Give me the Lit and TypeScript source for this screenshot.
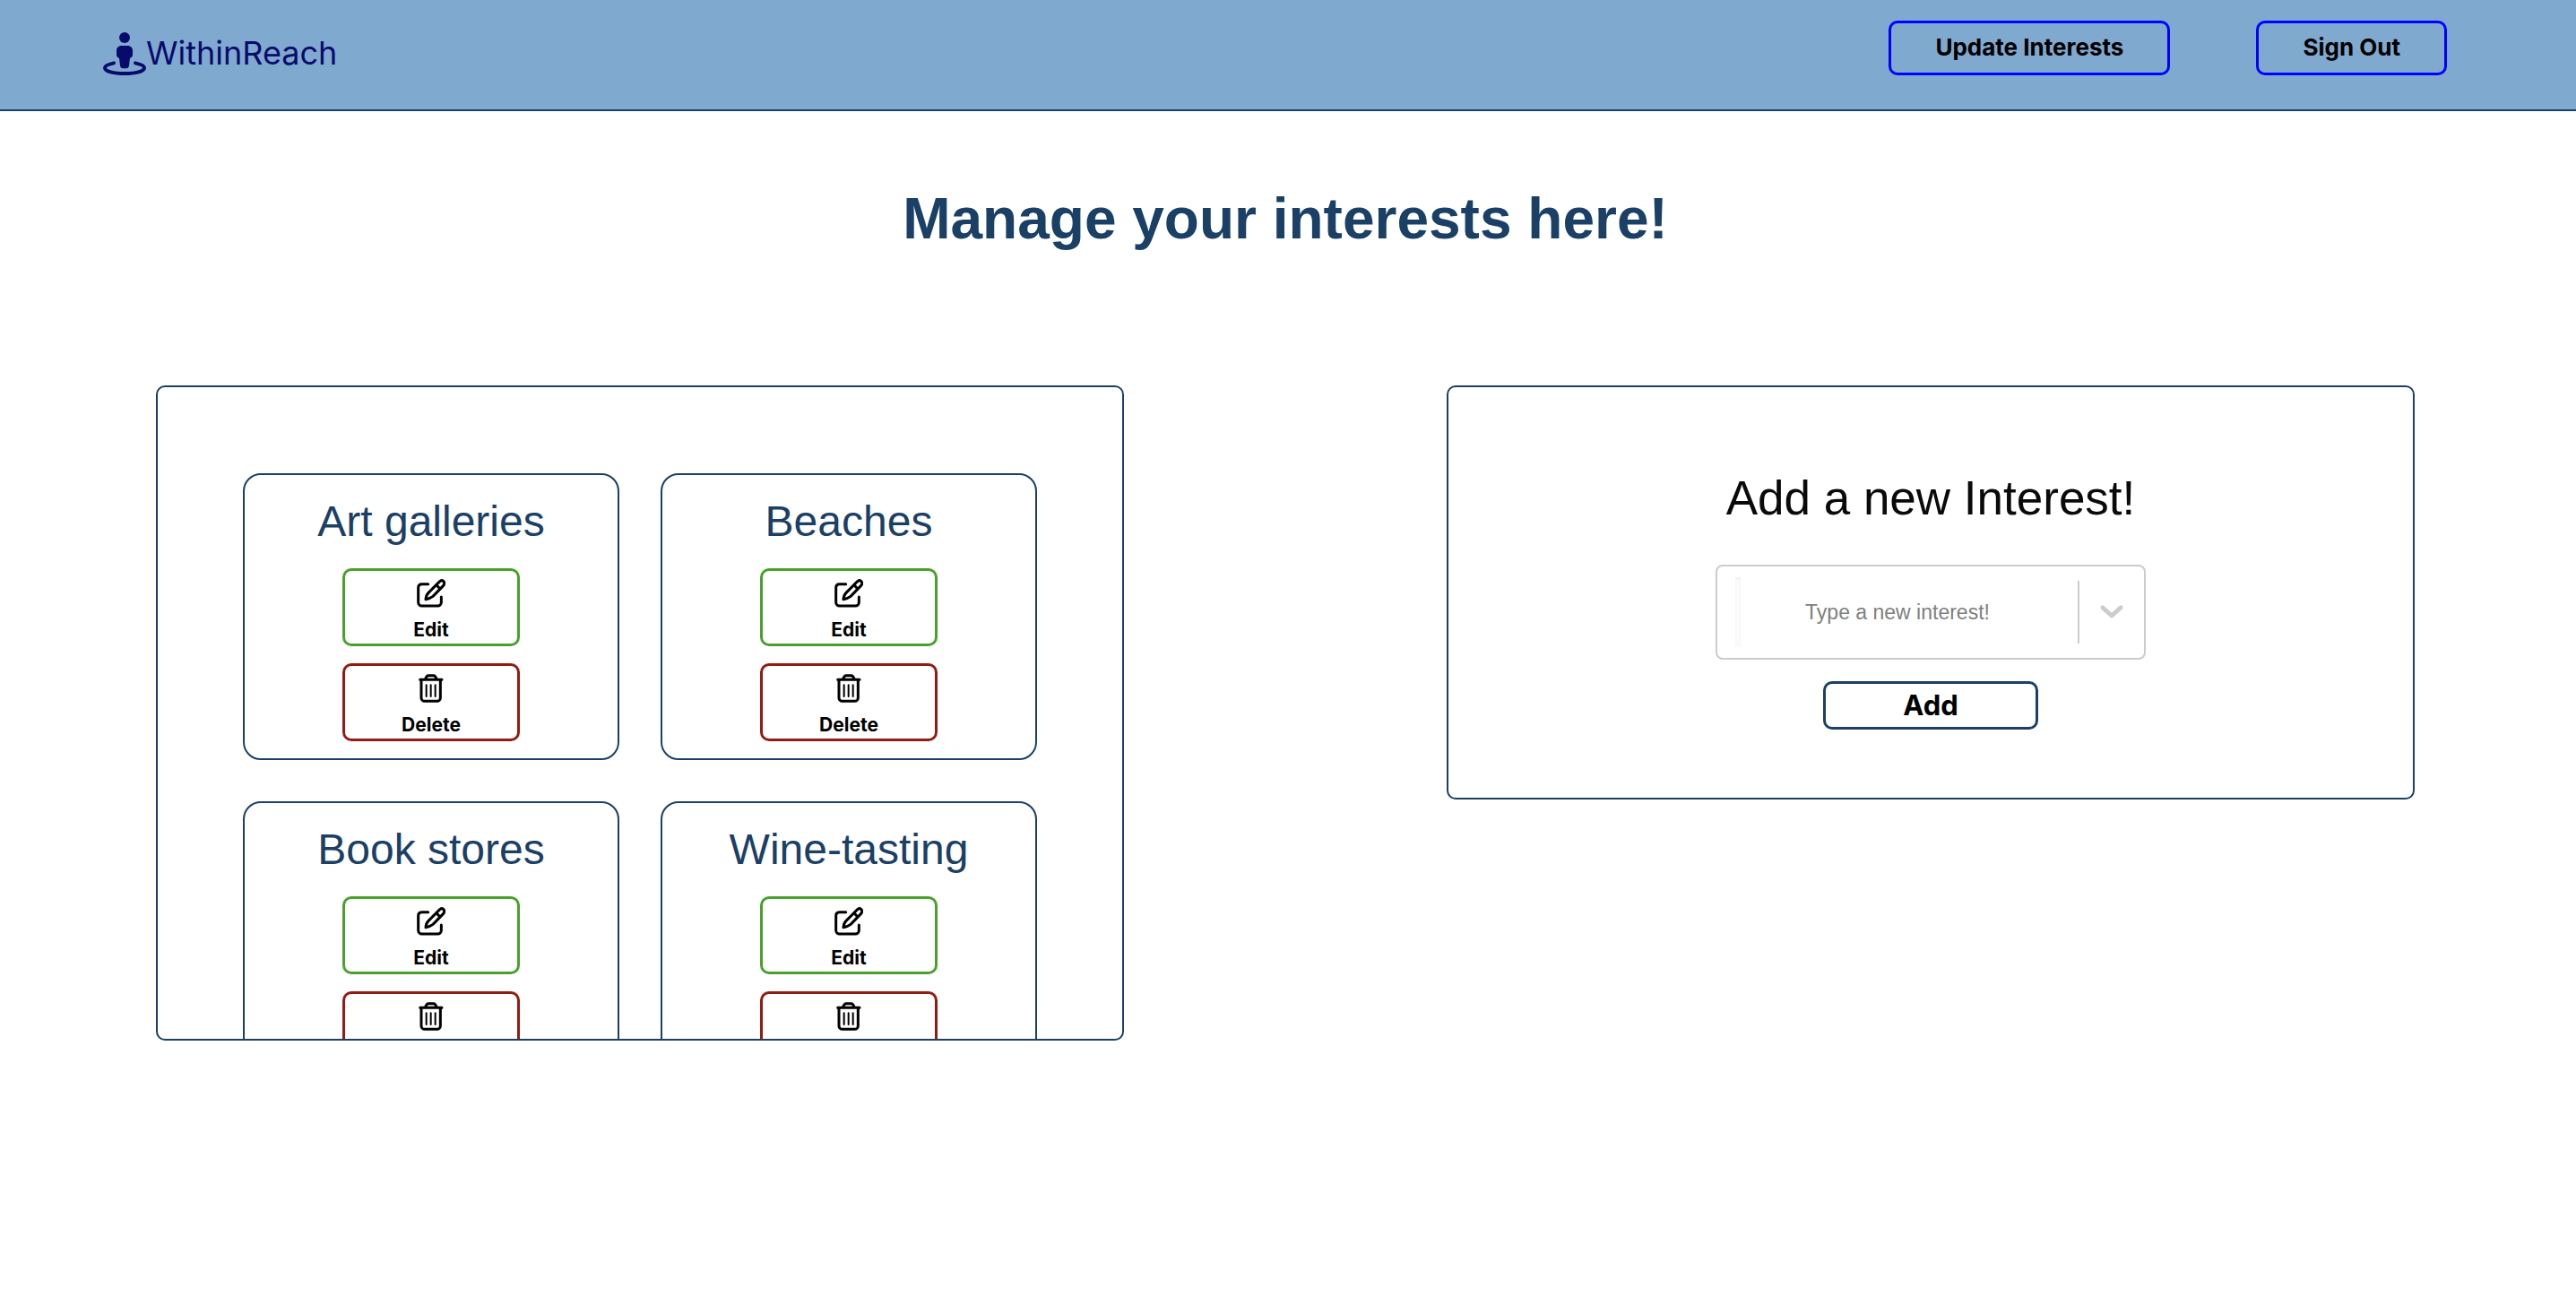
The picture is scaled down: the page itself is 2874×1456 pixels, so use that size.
import { LitElement, html, css, svg } from "lit";
import { customElement, property } from "lit/decorators.js";

const personIcon = svg`
  <circle cx="72" cy="18" r="18" fill="currentColor" />
  <path d="M61 45h22c9 0 16 7 16 16v15c0 6-4 9-9 11l-3 25c-1 6-4 9-9 9H66c-5 0-8-3-9-9l-3-25c-5-2-9-5-9-11V61c0-9 7-16 16-16z" fill="currentColor" />
  <path d="M36 103C18 107 6 112 6 119c0 12 30 19 66 19s66-7 66-19c0-7-12-12-30-16" fill="none" stroke="currentColor" stroke-width="12" stroke-linecap="round" />`;

const editIcon = html`<svg class="icon" viewBox="0 0 96 96" aria-hidden="true">
  <g fill="none" stroke="currentColor" stroke-width="9" stroke-linecap="round" stroke-linejoin="round">
    <path d="M38 17H17Q5 17 5 29V78a12 12 0 0 0 12 12H70a12 12 0 0 0 12-12V60" />
    <path d="M77 8Q85 2 90 8T89 22L54 58Q45 65 30 68Q31 54 39 46Z" />
    <path d="M66 20L77 32" />
  </g>
</svg>`;

const trashIcon = html`<svg class="icon" viewBox="0 0 96 96" aria-hidden="true">
  <g fill="none" stroke="currentColor" stroke-width="9" stroke-linecap="round" stroke-linejoin="round">
    <path d="M11 19H84M28 19Q32 5 39 5H56Q63 5 67 19" />
    <path d="M15 20V80a11 11 0 0 0 11 11H68a11 11 0 0 0 11-11V20" />
    <path d="M32 37V75M47 37V75M62 37V75" stroke-width="6" />
  </g>
</svg>`;

@customElement("interest-card")
class InterestCard extends LitElement {
  @property() name = "";

  static styles = css`
    :host {
      display: flex;
      flex-direction: column;
      align-items: center;
      box-sizing: border-box;
      padding: 24px 16px 19px;
      border: 2px solid #1b4066;
      border-radius: 20px;
    }
    .title {
      margin: 0 0 24px;
      color: #1b4066;
      font: 400 48px/56px "Liberation Sans", Arial, sans-serif;
    }
    .actions {
      display: flex;
      flex-direction: column;
      gap: 19px;
      width: 198px;
    }
    .action {
      display: flex;
      flex-direction: column;
      align-items: center;
      gap: 13px;
      padding: 9px 0 3px;
      border: 3px solid #4aa02c;
      border-radius: 10px;
      background: none;
      color: #000;
      font: 700 21px/24px Inter, sans-serif;
      cursor: pointer;
    }
    .delete {
      border-color: #921c12;
    }
    .icon {
      display: block;
      width: 32px;
      height: 32px;
    }
  `;

  render() {
    return html`
      <h2 class="title">${this.name}</h2>
      <div class="actions">
        <button class="action" type="button">${editIcon}<span>Edit</span></button>
        <button class="action delete" type="button">${trashIcon}<span>Delete</span></button>
      </div>
    `;
  }
}

@customElement("app-root")
class AppRoot extends LitElement {
  private interests = ["Art galleries", "Beaches", "Book stores", "Wine-tasting"];

  static styles = css`
    :host {
      display: block;
      min-height: 100vh;
      background: #fff;
      font-family: Inter, sans-serif;
    }
    .header {
      display: flex;
      justify-content: space-between;
      align-items: flex-start;
      box-sizing: border-box;
      padding: 23px 144px 38px 115px;
      border-bottom: 2px solid #1b4066;
      background: #80a9d0;
    }
    .brand {
      display: flex;
      align-items: flex-start;
      padding-top: 13px;
      color: #080b6c;
      font-size: 36px;
      line-height: 46px;
      text-decoration: none;
    }
    .logo {
      width: 48px;
      height: 48px;
    }
    .nav {
      display: flex;
      gap: 96px;
    }
    .nav-button {
      padding: 12px 49px 13px;
      border: 3px solid #00f;
      border-radius: 10px;
      background: none;
      color: #000;
      font: 700 26px/30px Inter, sans-serif;
      cursor: pointer;
    }
    .main {
      padding: 84px 180px 96px 174px;
    }
    .heading {
      margin: 0 0 150px;
      color: #1b4066;
      font: 700 64px/72px "Liberation Sans", Arial, sans-serif;
      text-align: center;
    }
    .columns {
      display: grid;
      grid-template-columns: 3fr 1fr 3fr;
      align-items: start;
    }
    .panel {
      box-sizing: border-box;
      border: 2px solid #1b4066;
      border-radius: 10px;
    }
    .list {
      display: grid;
      grid-template-columns: 1fr 1fr;
      gap: 46px;
      max-height: 731px;
      padding: 96px 95px;
      overflow-y: auto;
      scrollbar-width: none;
    }
    .form {
      grid-column: 3;
      display: flex;
      flex-direction: column;
      align-items: center;
      padding: 88px 96px 76px;
    }
    .form-title {
      margin-bottom: 38px;
      color: #0a0a0a;
      font: 400 53px/72px "Liberation Sans", Arial, sans-serif;
    }
    .combo {
      display: flex;
      align-items: center;
      box-sizing: border-box;
      width: 480px;
      height: 106px;
      margin-bottom: 24px;
      padding-left: 20px;
      border: 2px solid #ccc;
      border-radius: 8px;
    }
    .caret {
      width: 6px;
      height: 78px;
      background: #fafafa;
      box-shadow: inset 0 2px 2px #f0f0f0;
    }
    .input {
      flex: 1;
      min-width: 0;
      height: 78px;
      padding: 0 26px 0 0;
      border: 0;
      outline: 0;
      background: none;
      color: #333;
      font: 400 23px/32px "Liberation Sans", Arial, sans-serif;
      text-align: center;
    }
    .input::placeholder {
      color: #808080;
      opacity: 1;
    }
    .toggle {
      display: flex;
      align-items: center;
      justify-content: center;
      width: 74px;
      height: 70px;
      padding: 0;
      border: 0;
      border-left: 2px solid #ccc;
      background: none;
      color: #ccc;
    }
    .chevron {
      width: 40px;
      height: 40px;
    }
    .add {
      width: 240px;
      padding: 4px 0;
      border: 3px solid #1b4066;
      border-radius: 10px;
      background: none;
      color: #000;
      font: 700 31px/40px Inter, sans-serif;
      cursor: pointer;
    }
  `;

  render() {
    return html`
      <header class="header">
        <a class="brand" href="#">
          <svg class="logo" viewBox="0 0 144 144" aria-hidden="true">${personIcon}</svg>
          <span>WithinReach</span>
        </a>
        <nav class="nav">
          <button class="nav-button" type="button">Update Interests</button>
          <button class="nav-button" type="button">Sign Out</button>
        </nav>
      </header>
      <main class="main">
        <h1 class="heading">Manage your interests here!</h1>
        <div class="columns">
          <section class="panel list">
            ${this.interests.map((name) => html`<interest-card .name=${name}></interest-card>`)}
          </section>
          <form class="panel form" @submit=${(e: Event) => e.preventDefault()}>
            <label class="form-title" for="interest">Add a new Interest!</label>
            <div class="combo">
              <span class="caret"></span>
              <input class="input" id="interest" type="text" placeholder="Type a new interest!" />
              <button class="toggle" type="button" aria-label="Show options">
                <svg class="chevron" viewBox="0 0 40 40" aria-hidden="true">
                  <path d="M10 15L20 24L30 15" fill="none" stroke="currentColor" stroke-width="5" stroke-linecap="round" stroke-linejoin="round" />
                </svg>
              </button>
            </div>
            <button class="add" type="submit">Add</button>
          </form>
        </div>
      </main>
    `;
  }
}
